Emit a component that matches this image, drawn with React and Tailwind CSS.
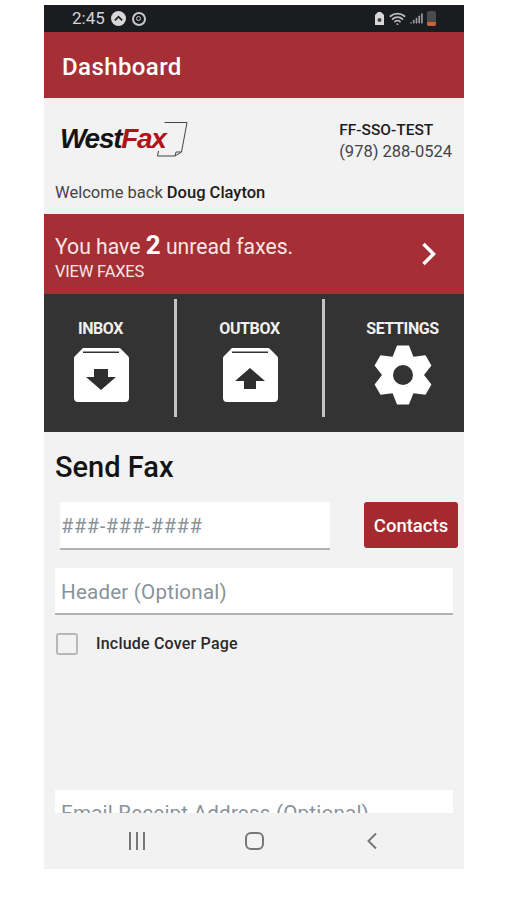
import { Signal, Wifi } from 'lucide-react'

function gearPath() {
  // six teeth, flat tops, centre at 30,30
  const pts = []
  for (let i = 0; i < 6; i++) {
    const a = (i * 60 - 90) * (Math.PI / 180)
    const at = (r, off) => `${(30 + r * Math.cos(a + off)).toFixed(2)} ${(30 + r * Math.sin(a + off)).toFixed(2)}`
    pts.push(at(21, -0.52), at(30, -0.2), at(30, 0.2), at(21, 0.52))
  }
  return `M${pts.join('L')}Z M30 20a10 10 0 1 0 0 20 10 10 0 0 0 0-20z`
}

function BoxIcon({ down }) {
  return (
    <svg width="56" height="56" viewBox="0 0 56 56">
      <path
        fill="#fff"
        fillRule="evenodd"
        d="M10 1h36a3 3 0 0 1 2 1l7 7a3 3 0 0 1 1 2v40a4 4 0 0 1-4 4H5a4 4 0 0 1-4-4V11a3 3 0 0 1 1-2l7-7a3 3 0 0 1 1-1z M10 4.500h36v1.500H10z"
      />
      {down ? (
        <path fill="#2f2f2f" d="M21 22h14v8h8L28 43 13 30h8z" />
      ) : (
        <path fill="#2f2f2f" d="M28 21l15 13h-9v8H22v-8h-9z" />
      )}
    </svg>
  )
}

function GearIcon() {
  return (
    <svg width="60" height="60" viewBox="0 0 60 60">
      <path fill="#fff" fillRule="evenodd" d={gearPath()} />
    </svg>
  )
}

function Logo() {
  return (
    <div className="relative w-[128px] h-[36px]">
      <div className="font-['Liberation_Sans',sans-serif] italic font-bold text-[28px] leading-[36px] tracking-[-1.3px] text-[#141414]">
        West<span className="text-[#b01218]">Fax</span>
      </div>
      <svg className="absolute right-0 top-0" width="32" height="36" viewBox="0 0 32 36" fill="none" stroke="#444" strokeWidth="1">
        <path d="M8.500 1.500H31L25.500 31 19 35H1.500l1-5" />
        <path d="M19 35l1-4h5.500" />
      </svg>
    </div>
  )
}

function StatusBar() {
  return (
    <div className="h-[27px] bg-[#1a1c20] flex items-center pl-[28px] pr-[28px] text-[#d4d4d4]">
      <span className="text-[17px]">2:45</span>
      <span className="ml-[6px] w-[15px] h-[15px] rounded-full bg-[#d8d8d8] flex items-center justify-center">
        <svg width="9" height="9" viewBox="0 0 10 10" fill="none" stroke="#222" strokeWidth="2"><path d="M1 7l4-4 4 4" /></svg>
      </span>
      <span className="ml-[6px] w-[14px] h-[14px] rounded-full border-2 border-[#c8c8c8] flex items-center justify-center">
        <span className="w-[5px] h-[5px] rounded-full border border-[#c8c8c8]" />
      </span>
      <div className="ml-auto flex items-center gap-[4px]">
        <svg width="11" height="15" viewBox="0 0 11 15"><path fill="#d8d8d8" d="M2 3l2-2h3l2 2 1 1v10H1V4z" /><circle cx="5.500" cy="9" r="2" fill="#444" /></svg>
        <Wifi size={17} color="#bdbdbd" strokeWidth={2.5} />
        <Signal size={13} color="#a0a0a0" strokeWidth={3} />
        <div className="w-[9px] h-[15px] rounded-[2px] bg-[#4c4c4c] flex flex-col justify-end overflow-hidden">
          <div className="h-[4px] bg-[#c8643c]" />
        </div>
      </div>
    </div>
  )
}

function Tile({ label, className, children }) {
  return (
    <div className={`flex flex-col items-center pt-[21px] ${className}`}>
      <div className="text-[16px] leading-[18px] font-bold text-[#f0f0f0] tracking-[-0.4px]">{label}</div>
      {children}
    </div>
  )
}

export default function App() {
  return (
    <div className="min-h-[900px] bg-white font-['Roboto',sans-serif]">
      <div className="w-[420px] h-[869px] ml-[44px] pt-[5px] flex flex-col">
        <StatusBar />
        <div className="h-[66px] bg-[#a52f35] flex items-center px-[18px] pt-[3px] text-white text-[24px] font-medium tracking-[0.4px]">
          Dashboard
        </div>

        <div className="flex-1 min-h-0 overflow-hidden bg-[#f2f2f2] flex flex-col">
          {/* Account */}
          <div className="h-[116px] shrink-0 pl-[11px] pr-[12px] pt-[21px]">
            <div className="flex justify-between">
              <div className="pl-[5px] pt-[2px]"><Logo /></div>
              <div className="text-[16.500px] leading-[22px] text-[#1c1c1c]">
                <div className="font-medium text-[15.500px]">FF-SSO-TEST</div>
                <div className="text-[#444]">(978) 288-0524</div>
              </div>
            </div>
            <div className="mt-[20px] text-[16.500px] text-[#444] leading-[20px]">
              Welcome back <span className="font-medium text-[#1c1c1c]">Doug Clayton</span>
            </div>
          </div>

          {/* Unread banner */}
          <div className="h-[80px] shrink-0 bg-[#a52f35] flex items-center justify-between pl-[11px] pr-[27px] text-white">
            <div className="pt-[4px]">
              <div className="text-[21.200px] leading-[30px] text-[#f6e6e6]">
                You have <span className="text-[26px] font-bold text-white">2</span> unread faxes.
              </div>
              <div className="text-[16.500px] leading-[20px] text-[#f6e6e6] tracking-[-0.2px]">VIEW FAXES</div>
            </div>
            <svg width="16" height="24" viewBox="0 0 16 24" fill="none" stroke="#fff" strokeWidth="3.500"><path d="M2.500 2l10 10-10 10" /></svg>
          </div>

          {/* Tiles */}
          <div className="h-[138px] shrink-0 bg-[#333333] flex pt-[5px] pb-[15px]">
            <Tile label="INBOX" className="w-[133px] pr-[17px] border-r-[3px] border-[#c4c4c4]">
              <div className="mt-[9px]"><BoxIcon down /></div>
            </Tile>
            <Tile label="OUTBOX" className="w-[148px] border-r-[3px] border-[#c4c4c4]">
              <div className="mt-[9px]"><BoxIcon /></div>
            </Tile>
            <Tile label="SETTINGS" className="flex-1 pl-[16px]">
              <div className="mt-[7px]"><GearIcon /></div>
            </Tile>
          </div>

          {/* Send fax */}
          <div className="px-[11px] pt-[19px]">
            <h1 className="text-[29px] leading-[32px] font-medium text-[#141414]">Send Fax</h1>
            <div className="mt-[19px] flex items-start justify-between pl-[5px]">
              <div className="w-[270px] h-[48px] bg-white border-b-2 border-[#b0b3b6] flex items-center px-[1px] pt-[1px] text-[20px] text-[#8a9299] tracking-[0.6px]">
                ###-###-####
              </div>
              <div className="w-[94px] h-[46px] -mr-[5px] pt-[4px] bg-[#a52a30] rounded-[3px] flex items-center justify-center text-white text-[18.500px] font-medium">
                Contacts
              </div>
            </div>
            <div className="mt-[18px] h-[47px] bg-white border-b-2 border-[#b0b3b6] flex items-center px-[6px] pt-[3px] text-[20.600px] text-[#8a9299] tracking-[0.2px]">
              Header (Optional)
            </div>
            <div className="mt-[16px] flex items-center pl-[1px]">
              <div className="w-[22px] h-[22px] rounded-[3px] border-2 border-[#b8b8b8] bg-[#f2f2f2]" />
              <span className="ml-[18px] mt-[1px] text-[16px] font-medium text-[#2a2a2a] tracking-[0.2px]">Include Cover Page</span>
            </div>
            <div className="mt-[134px] h-[47px] bg-white flex items-center px-[6px] text-[20.600px] text-[#8a9299] tracking-[0.2px]">
              Email Receipt Address (Optional)
            </div>
          </div>
        </div>

        {/* Android nav */}
        <div className="h-[56px] shrink-0 bg-[#f2f2f2] grid grid-cols-3 items-center pl-[34px] pr-[33px]">
          <div className="flex justify-center gap-[5px]">
            <span className="w-[2px] h-[18px] bg-[#777]" />
            <span className="w-[2px] h-[18px] bg-[#777]" />
            <span className="w-[2px] h-[18px] bg-[#777]" />
          </div>
          <div className="flex justify-center">
            <span className="w-[19px] h-[18px] rounded-[6px] border-2 border-[#777]" />
          </div>
          <div className="flex justify-center">
            <svg width="12" height="18" viewBox="0 0 12 18" fill="none" stroke="#777" strokeWidth="2"><path d="M10 1.500L2.500 9l7.500 7.500" /></svg>
          </div>
        </div>
      </div>
    </div>
  )
}
